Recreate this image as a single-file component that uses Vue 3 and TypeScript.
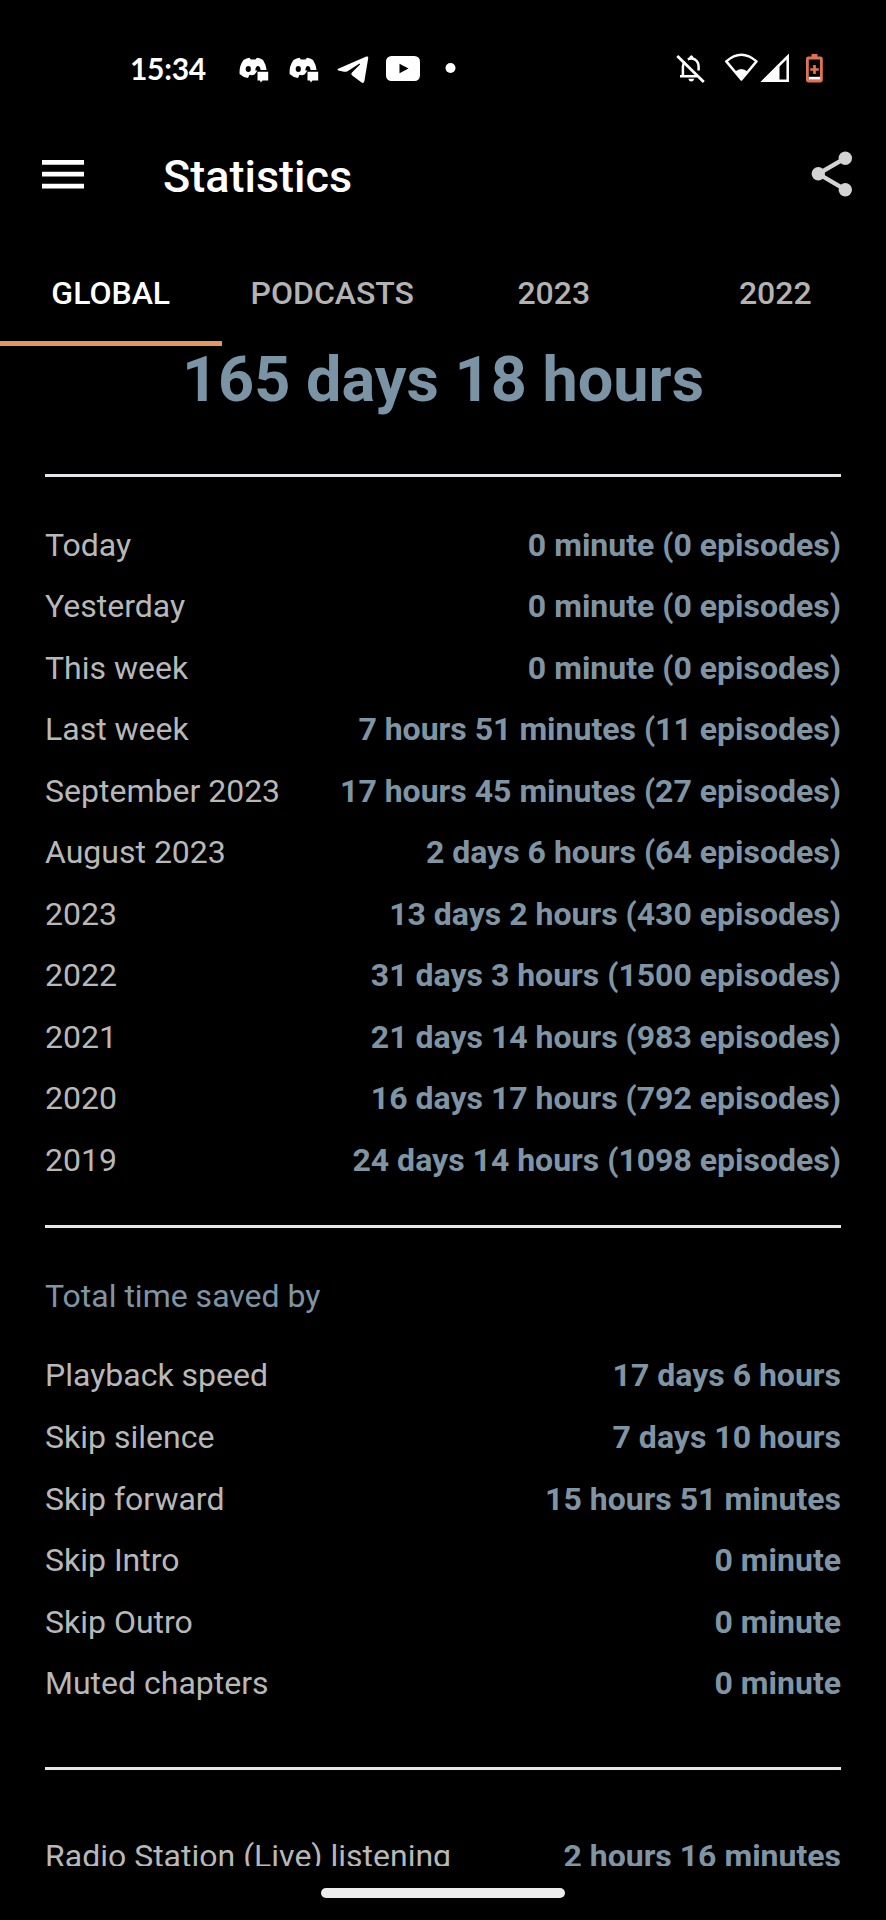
<script setup lang="ts">
interface StatRow {
  label: string
  value: string
}

const tabs: string[] = ['GLOBAL', 'PODCASTS', '2023', '2022']
const activeTab = 'GLOBAL'

const listening: StatRow[] = [
  { label: 'Today', value: '0 minute (0 episodes)' },
  { label: 'Yesterday', value: '0 minute (0 episodes)' },
  { label: 'This week', value: '0 minute (0 episodes)' },
  { label: 'Last week', value: '7 hours 51 minutes (11 episodes)' },
  { label: 'September 2023', value: '17 hours 45 minutes (27 episodes)' },
  { label: 'August 2023', value: '2 days 6 hours (64 episodes)' },
  { label: '2023', value: '13 days 2 hours (430 episodes)' },
  { label: '2022', value: '31 days 3 hours (1500 episodes)' },
  { label: '2021', value: '21 days 14 hours (983 episodes)' },
  { label: '2020', value: '16 days 17 hours (792 episodes)' },
  { label: '2019', value: '24 days 14 hours (1098 episodes)' },
]

const saved: StatRow[] = [
  { label: 'Playback speed', value: '17 days 6 hours' },
  { label: 'Skip silence', value: '7 days 10 hours' },
  { label: 'Skip forward', value: '15 hours 51 minutes' },
  { label: 'Skip Intro', value: '0 minute' },
  { label: 'Skip Outro', value: '0 minute' },
  { label: 'Muted chapters', value: '0 minute' },
]
</script>

<template>
  <div class="screen">
    <div class="status">
      <span class="clock">15:34</span>
      <svg v-for="n in 2" :key="n" class="discord" width="31" height="36" viewBox="0 0 31 36">
        <path
          fill="#fff"
          d="M4.500 10 Q7.500 8 10.500 7.800 L11.800 9.600 Q14 9.200 16.500 9.600 L18 7.800 Q21.500 8.200 24 10 Q27 14.500 27.600 20 L18.500 20 L17.500 22 L15.500 24.600 Q13 25.600 10.500 24.800 L9 28 Q3.500 27 0.600 24 Q0 16 4.500 10 Z"
        />
        <ellipse cx="9.300" cy="19" rx="2.600" ry="3" fill="#000" />
        <path d="M16.300 20.500 Q16.500 16 19 16 Q21.300 16.200 21.600 20.500 Z" fill="#000" />
        <path d="M18.500 21.800 H29.200 V30.600 H23.500 L21.800 32.400 L21 30.600 H18.500 Z" fill="#fff" />
      </svg>
      <svg class="telegram" width="32" height="36" viewBox="0 0 32 36">
        <path
          fill="#fff"
          d="M1.200 18.800 L29.300 6.600 Q31.600 5.800 31.200 8.300 L27.400 31 Q26.700 34 24.300 32.200 L15.200 25.600 Q13.600 24 15 22.500 L23.200 14.200 L22.500 13.600 L10.500 21.200 Q8.800 22.200 7 21.700 L1.400 20.400 Q-0.400 19.600 1.200 18.800 Z"
        />
      </svg>
      <svg class="youtube" width="34" height="36" viewBox="0 0 34 36">
        <rect x="0" y="6" width="34" height="25" rx="5.500" fill="#fff" />
        <path d="M13.500 13.800 V23.200 L22.500 18.500 Z" fill="#000" />
      </svg>
      <svg class="more" width="11" height="36" viewBox="0 0 11 36">
        <circle cx="5.500" cy="18" r="5" fill="#fff" />
      </svg>

      <svg class="bell" width="29" height="36" viewBox="0 0 29 36">
        <g fill="none" stroke="#fff" stroke-width="2.500">
          <path d="M6.900 26 V16.500 Q7.200 13.500 8.800 11.700 M11.800 9.300 Q15.500 7.600 19.200 9.700 Q22.600 12 22.600 16.500 V20.500 M4 26.200 H21" />
          <path d="M1.300 6 L27.800 32" stroke-width="2.800" />
        </g>
        <path d="M13.300 9 V7 Q15.400 3.600 17.400 7 V9 Z M12.300 28.700 H18.300 Q17.600 31.600 15.300 31.600 Q13 31.600 12.300 28.700 Z" fill="#fff" />
      </svg>
      <svg class="wifi" width="35" height="36" viewBox="0 0 35 36">
        <path d="M2.300 11.400 Q17.300 -2 32.500 11.400 L17.400 29.500 Z" fill="none" stroke="#fff" stroke-width="2.500" stroke-linejoin="round" />
        <path d="M11.200 21.500 Q17.300 16.500 23.500 21.500 L17.400 30 Z" fill="#fff" />
      </svg>
      <svg class="signal" width="30" height="36" viewBox="0 0 30 36">
        <path d="M3.500 30.700 L27.700 6.500 V30.700 Z" fill="none" stroke="#fff" stroke-width="2.500" />
        <path d="M2 31 L19.500 13.500 V31 Z" fill="#fff" />
      </svg>
      <svg class="battery" width="19" height="36" viewBox="0 0 19 36">
        <path d="M6.500 4 H12.500 V7.500 H6.500 Z" fill="#e27150" />
        <rect x="2.400" y="8" width="14" height="23" rx="1" fill="none" stroke="#e27150" stroke-width="2.800" />
        <path d="M9.500 15 V24 M5.200 19.500 H13.800" stroke="#e27150" stroke-width="2.700" />
        <rect x="3.800" y="26.800" width="11.400" height="2.800" fill="#fff" />
      </svg>
    </div>

    <header class="appbar">
      <svg class="menu" width="42" height="30" viewBox="0 0 42 30">
        <path d="M0 3.300 H42 M0 15.200 H42 M0 27.200 H42" stroke="#fff" stroke-width="4.700" />
      </svg>
      <h1 class="title">Statistics</h1>
      <svg class="share" width="42" height="46" viewBox="0 0 42 46">
        <path d="M34.300 7.200 L7.300 22.800 L34.300 38.700" fill="none" stroke="#d3d3d3" stroke-width="4.300" />
        <g fill="#d3d3d3">
          <circle cx="34.300" cy="7.200" r="6.700" />
          <circle cx="7.300" cy="22.800" r="6.700" />
          <circle cx="34.300" cy="38.700" r="6.700" />
        </g>
      </svg>
    </header>

    <nav class="tabs">
      <div v-for="tab in tabs" :key="tab" class="tab" :class="{ active: tab === activeTab }">{{ tab }}</div>
    </nav>

    <main class="content">
      <div class="total">165 days 18 hours</div>
      <div class="rule first"></div>
      <div v-for="row in listening" :key="row.label" class="row">
        <span>{{ row.label }}</span>
        <span class="value">{{ row.value }}</span>
      </div>
      <div class="rule second"></div>
      <div class="heading">Total time saved by</div>
      <div v-for="row in saved" :key="row.label" class="row">
        <span>{{ row.label }}</span>
        <span class="value">{{ row.value }}</span>
      </div>
      <div class="rule third"></div>
      <div class="row">
        <span>Radio Station (Live) listening</span>
        <span class="value">2 hours 16 minutes</span>
      </div>
    </main>

    <footer class="navbar"><div class="handle"></div></footer>
  </div>
</template>

<style>
body {
  background: #000;
}
</style>

<style scoped>
.screen {
  width: 886px;
  height: 1920px;
  overflow: hidden;
  display: flex;
  flex-direction: column;
  background: #000;
  font-family: Roboto, 'Liberation Sans', sans-serif;
  color: #b8b8b8;
}
.status {
  padding: 50px 62px 0 130px;
  box-sizing: border-box;
  height: 108px;
  display: flex;
  align-items: flex-start;
  flex: none;
}
.status svg {
  flex: none;
}
.clock {
  width: 76px;
  height: 36px;
  line-height: 36px;
  margin-right: 33px;
  flex: none;
  font-family: Lato, sans-serif;
  font-weight: 700;
  font-size: 30px;
  letter-spacing: -0.3px;
  color: #fff;
  white-space: nowrap;
}
.discord {
  margin-right: 19px;
}
.telegram {
  margin-left: -2px;
  margin-right: 17px;
}
.youtube {
  margin-right: 25px;
}
.bell {
  margin-left: auto;
  margin-right: 19px;
}
.wifi {
  margin-right: 1px;
}
.signal {
  margin-right: 15px;
}
.appbar {
  height: 132px;
  flex: none;
  display: flex;
  align-items: center;
  box-sizing: border-box;
  padding: 0 33px 0 42px;
}
.menu {
  margin-right: 79px;
}
.title {
  margin: 6px 0 0;
  font-size: 45px;
  line-height: 60px;
  font-weight: 500;
  color: #fff;
}
.share {
  margin-left: auto;
}
.tabs {
  height: 106px;
  flex: none;
  display: grid;
  grid-template-columns: repeat(4, 1fr);
}
.tab {
  box-sizing: border-box;
  border-bottom: 5px solid transparent;
  padding-top: 23px;
  line-height: 60px;
  font-size: 32px;
  font-weight: 500;
  text-align: center;
  color: #b3b3b3;
}
.tab.active {
  color: #fff;
  border-bottom-color: #e3975f;
}
.content {
  height: 1520px;
  flex: none;
  box-sizing: border-box;
  padding: 0 45px;
  overflow: hidden;
}
.total {
  height: 67px;
  line-height: 67px;
  font-size: 63px;
  font-weight: 700;
  text-align: center;
  color: #7b94a5;
  white-space: nowrap;
}
.rule {
  height: 3px;
  background: #e4e8e8;
}
.first {
  margin: 61px 0 37.6px;
}
.second {
  margin: 34px 0 38px;
}
.third {
  margin: 52px 0 56px;
}
.row,
.heading {
  display: flex;
  justify-content: space-between;
  height: 61.54px;
  line-height: 61.54px;
  font-size: 32px;
  white-space: nowrap;
}
.value {
  font-weight: 700;
  color: #8095a4;
}
.heading {
  margin-bottom: 17.5px;
  color: #8095a4;
}
.navbar {
  flex: 1;
  display: flex;
  justify-content: center;
  padding-top: 22px;
}
.handle {
  width: 244px;
  height: 10px;
  border-radius: 5px;
  background: #ececec;
}
</style>
